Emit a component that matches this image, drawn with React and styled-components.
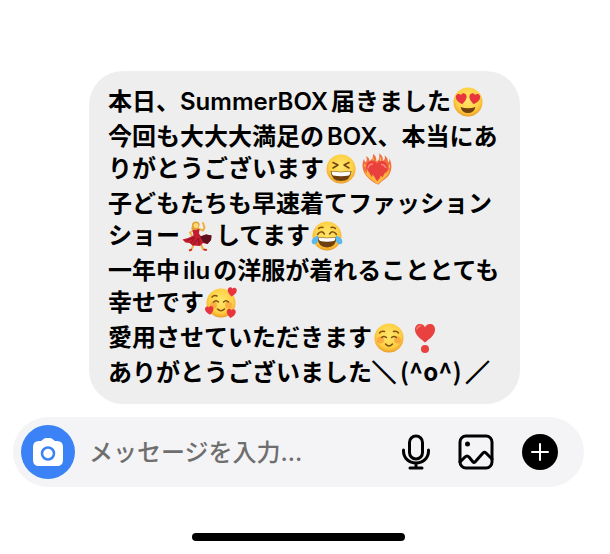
import React from "react";
import styled, { createGlobalStyle } from "styled-components";

const FaceBase = ({ id }) => (
    <>
        <defs>
            <radialGradient id={id} cx="50%" cy="42%" r="58%">
                <stop offset="0" stopColor="#ffe76c" />
                <stop offset="0.7" stopColor="#fed145" />
                <stop offset="0.92" stopColor="#f5ae2e" />
                <stop offset="1" stopColor="#e39724" />
            </radialGradient>
        </defs>
        <circle cx="30" cy="30" r="29" fill={`url(#${id})`} />
    </>
);

const Heart = ({ transform, fill = "#e8343c" }) => (
    <path
        transform={transform}
        fill={fill}
        d="M0 10C-5 6-10 2-10-4C-10-8-7-10-4.500-10C-2.500-10-.8-9 0-7C.8-9 2.500-10 4.500-10C7-10 10-8 10-4C10 2 5 6 0 10Z"
    />
);

const HeartEyes = () => (
    <Emoji viewBox="0 0 60 60" role="img" aria-label="😍">
        <FaceBase id="heartEyes" />
        <Heart transform="translate(17 24) rotate(-8) scale(1.08)" />
        <Heart transform="translate(43 24) rotate(8) scale(1.08)" />
        <path d="M15 40Q30 45 45 40Q42 52 30 52Q18 52 15 40Z" fill="#70400f" />
    </Emoji>
);

const Laughing = () => (
    <Emoji viewBox="0 0 60 60" role="img" aria-label="😆">
        <FaceBase id="laughing" />
        <path
            d="M14 17L24 22L14 28M46 17L36 22L46 28"
            fill="none"
            stroke="#70400f"
            strokeWidth="3"
            strokeLinecap="round"
            strokeLinejoin="round"
        />
        <path d="M9 34Q30 37 51 34Q49 54 30 54Q11 54 9 34Z" fill="#70400f" />
        <path d="M11 35Q30 38 49 35Q49 41 46 43Q30 46 14 43Q11 40 11 35Z" fill="#fff" />
    </Emoji>
);

const FireHeart = () => (
    <Emoji viewBox="0 0 60 60" role="img" aria-label="❤️‍🔥">
        <path
            d="M29 60C18 54 4 43 2 30C0 22 1 16 4 10C5 14 6 16 8 16C11 11 9 7 8 4C14 7 15 11 15 14C19 11 23 8 22 0C29 4 28 9 29 15C34 13 36 7 34-1C41 3 43 8 41 14C46 12 47 8 45 3C52 7 52 13 52 17C55 15 55 12 55 9C60 19 60 31 55 40C50 50 38 53 34 61Z"
            fill="#f0703f"
        />
        <path
            d="M20 10L22 6L24 13ZM35 11L38 6L38 15ZM4 23L6 20L8 27ZM53 25L56 20L56 30Z"
            fill="#ffc25a"
        />
        <Heart transform="translate(30 34) scale(2.150 2)" fill="#e9403d" />
        <path d="M12 29Q13 20 22 20M38 21Q45 20 48 28" stroke="#f98374" strokeWidth="3" fill="none" />
        <path
            d="M31 61C24 53 10 49 5 34L10 38L10 30L17 42L20 47L21 41C26 46 27 51 31 55C33 50 37 49 37 43L41 47L47 35L47 40L55 30C56 44 40 51 31 61Z"
            fill="#ffb83f"
        />
    </Emoji>
);

const Dancer = () => (
    <Emoji viewBox="0 0 60 60" role="img" aria-label="💃">
        <path
            d="M31 15L42 19L45 13L42 4M25 18L16 23L20 30M25 42L20 55L16 59M36 43L42 56L48 58"
            fill="none"
            stroke="#f0ae3c"
            strokeWidth="4"
            strokeLinecap="round"
            strokeLinejoin="round"
        />
        <path d="M21 18L35 16L34 25L38 31L48 27L59 29L58 38L51 46L42 44L36 50L21 49L15 44L7 43L1 37L12 34L23 29Z" fill="#c41d2e" />
        <path d="M36 31L48 27L59 29L58 38L51 46L43 43Z" fill="#5e101c" />
        <path d="M9 39L25 33L18 44M22 48L33 34L34 48" fill="none" stroke="#8a1222" strokeWidth="2" />
        <path d="M20 18C17 14 21 11 20 7C21 0 33-1 35 6C36 11 32 17 26 17Z" fill="#e0a12c" />
        <circle cx="28" cy="9" r="5" fill="#ffd978" />
        <path d="M14 59L20 57M43 57L50 58" stroke="#c41d2e" strokeWidth="3" />
    </Emoji>
);

const TearsOfJoy = () => (
    <Emoji viewBox="0 0 60 60" role="img" aria-label="😂">
        <FaceBase id="tears" />
        <path
            d="M13 15Q17 11 22 13M38 13Q43 11 47 15M11 27Q18 17 25 26M35 26Q42 17 49 27"
            fill="none"
            stroke="#80500f"
            strokeWidth="3"
            strokeLinecap="round"
        />
        <path d="M11 32Q30 35 49 32Q48 53 30 53Q12 53 11 32Z" fill="#70400f" />
        <path d="M13 33Q30 36 47 33Q47 38 44 40Q30 43 16 40Q13 37 13 33Z" fill="#fff" />
        <path d="M12 29Q14 44 7 46Q0 48-1 41Q0 33 12 29ZM48 29Q46 44 53 46Q60 48 61 41Q60 33 48 29Z" fill="#5ab8ee" />
    </Emoji>
);

const LoveFace = () => (
    <Emoji viewBox="0 0 60 60" role="img" aria-label="🥰">
        <FaceBase id="love" />
        <circle cx="15" cy="34" r="7" fill="#f58635" opacity="0.5" />
        <circle cx="45" cy="34" r="7" fill="#f58635" opacity="0.5" />
        <path
            d="M12 18Q16 13 22 16M15 28Q20 23 25 28M35 28Q40 23 45 28M23 42Q30 49 37 42"
            fill="none"
            stroke="#80500f"
            strokeWidth="3"
            strokeLinecap="round"
        />
        <Heart transform="translate(52 8) rotate(9) scale(0.9)" />
        <Heart transform="translate(7 45) rotate(-9) scale(0.850)" />
        <Heart transform="translate(50 51) rotate(9) scale(0.9)" />
    </Emoji>
);

const Smiling = () => (
    <Emoji viewBox="0 0 60 60" role="img" aria-label="☺️">
        <FaceBase id="smiling" />
        <circle cx="13" cy="34" r="7" fill="#f58635" opacity="0.5" />
        <circle cx="47" cy="34" r="7" fill="#f58635" opacity="0.5" />
        <path
            d="M11 20Q15 15 21 17M39 17Q45 15 49 20M15 29Q20 25 25 29M35 29Q40 25 45 29M23 42Q30 50 37 42"
            fill="none"
            stroke="#80500f"
            strokeWidth="3"
            strokeLinecap="round"
        />
    </Emoji>
);

const HeartMark = () => (
    <Emoji viewBox="0 0 60 60" role="img" aria-label="❣️">
        <path
            d="M30 39C22 32 10 25 10 13C10 6 14 2 20 2C25 2 29 5 30 9C31 5 35 2 40 2C46 2 50 6 50 13C50 25 38 32 30 39Z"
            fill="#e9413f"
        />
        <circle cx="30" cy="52" r="8" fill="#e9413f" />
        <path d="M14 12Q15 6 21 6" fill="none" stroke="#f87b70" strokeWidth="3" strokeLinecap="round" />
    </Emoji>
);

function App() {
    return (
        <>
            <GlobalStyle />
            <Screen>
                <Bubble>
                    <Line>
                        本日、SummerBOX届きました
                        <HeartEyes />
                    </Line>
                    <Line>
                        今回も大大大満足のBOX、本当にありがとうございます
                        <Laughing />
                        <FireHeart />
                    </Line>
                    <Line>
                        子どもたちも早速着てファッションショー
                        <Dancer />
                        してます
                        <TearsOfJoy />
                    </Line>
                    <Line>
                        一年中iluの洋服が着れることとても幸せです
                        <LoveFace />
                    </Line>
                    <Line>
                        愛用させていただきます
                        <Smiling />
                        <HeartMark />
                    </Line>
                    <Line>
                        ありがとうございました
                        <Arm>＼</Arm>
                        <Kaomoji>(^o^)</Kaomoji>
                        <Arm>／</Arm>
                    </Line>
                </Bubble>
                <Composer onSubmit={(e) => e.preventDefault()}>
                    <CameraButton type="button" aria-label="カメラ">
                        <svg width="30" height="28" viewBox="0 0 30 28">
                            <path
                                d="M8 3L10 1.500Q11 0 13 0H17Q19 0 20 1.500L22 3H24Q30 3 30 9V22Q30 28 24 28H6Q0 28 0 22V9Q0 3 6 3Z"
                                fill="#fff"
                            />
                            <circle cx="15" cy="15.500" r="6" fill="none" stroke="#3b82f6" strokeWidth="2.500" />
                        </svg>
                    </CameraButton>
                    <MessageInput type="text" aria-label="メッセージ" placeholder="メッセージを入力..." />
                    <IconButton type="button" aria-label="音声">
                        <svg width="36" height="36" viewBox="0 0 36 36">
                            <rect x="11.500" y="2" width="13" height="23" rx="6.500" />
                            <path d="M5.500 16V17C5.500 24 11 29 18 29S30.500 24 30.500 17V16M18 29V34M12 34H24" />
                        </svg>
                    </IconButton>
                    <IconButton type="button" aria-label="写真">
                        <svg width="36" height="36" viewBox="0 0 36 36">
                            <rect x="2" y="2" width="32" height="32" rx="6" />
                            <circle cx="9.500" cy="10" r="2.500" fill="#000" stroke="none" />
                            <path d="M2 28L7 23Q9 21 11 23L15 28Q16 29 17 28L25 19Q26.500 17.500 28 19L34 25" />
                        </svg>
                    </IconButton>
                    <IconButton type="button" aria-label="追加" $wide>
                        <svg width="36" height="36" viewBox="0 0 36 36">
                            <circle cx="18" cy="18" r="18" fill="#000" stroke="none" />
                            <path d="M18 10V26M10 18H26" stroke="#fff" strokeWidth="2" />
                        </svg>
                    </IconButton>
                </Composer>
                <HomeBar />
            </Screen>
        </>
    );
}

export default App;

const GlobalStyle = createGlobalStyle`
    * {
        box-sizing: border-box;
    }
    body {
        margin: 0;
        background: #fff;
        font-family: Inter, "Noto Sans CJK JP", sans-serif;
    }
`;
const Screen = styled.main`
    display: flex;
    flex-direction: column;
    padding: 71px 26px 12px 13px;
`;
const Bubble = styled.div`
    display: flex;
    flex-direction: column;
    gap: 3px;
    margin: 0 64px 0 76px;
    padding: 15px 16px 15px 19px;
    border-radius: 34px;
    background: #eee;
`;
const Line = styled.p`
    margin: 0;
    font-size: 24px;
    font-weight: 600;
    line-height: 32px;
    color: #000;
    text-autospace: normal;
`;
const Kaomoji = styled.span`
    padding: 0 4px;
    font-family: "Noto Sans CJK JP", sans-serif;
    line-height: 0;
`;
const Arm = styled.span`
    -webkit-text-stroke: 1px #000;
`;
const Emoji = styled.svg`
    display: inline-block;
    width: 30px;
    height: 30px;
    margin: -4px 4px -4px 2px;
    vertical-align: -3px;
    overflow: visible;
`;
const Composer = styled.form`
    display: flex;
    align-items: center;
    gap: 24px;
    height: 70px;
    margin-top: 13px;
    padding: 0 22px 0 8px;
    border-radius: 35px;
    background: #f4f4f6;
`;
const CameraButton = styled.button`
    display: flex;
    align-items: center;
    justify-content: center;
    flex: none;
    width: 54px;
    height: 54px;
    margin-right: -10px;
    padding: 0;
    border: none;
    border-radius: 50%;
    background: #3b82f6;
    cursor: pointer;
`;
const MessageInput = styled.input`
    flex: 1;
    min-width: 0;
    height: 40px;
    padding: 0;
    border: none;
    outline: none;
    background: transparent;
    font-family: inherit;
    font-size: 24px;
    font-weight: 500;
    color: #000;
    &::placeholder {
        color: #6e6e6e;
        opacity: 1;
    }
`;
const IconButton = styled.button`
    display: flex;
    align-items: center;
    justify-content: center;
    flex: none;
    width: ${(props) => (props.$wide ? "44px" : "36px")};
    height: 44px;
    padding: 0;
    border: none;
    background: transparent;
    cursor: pointer;
    svg {
        fill: none;
        stroke: #000;
        stroke-width: 3;
        stroke-linecap: round;
        stroke-linejoin: round;
    }
`;
const HomeBar = styled.div`
    align-self: center;
    width: 213px;
    height: 8px;
    margin-top: 46px;
    border-radius: 4px;
    background: #000;
`;
